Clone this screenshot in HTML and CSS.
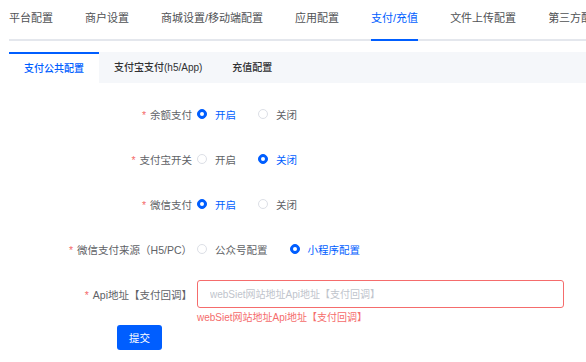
FILE: index.html
```html
<!DOCTYPE html>
<html lang="zh-CN">

<head>
    <meta charset="UTF-8">
    <meta name="viewport" content="width=device-width, initial-scale=1.0">
    <title>支付/充值</title>
    <link rel="stylesheet" href="styles.css">
</head>

<body>

    <!-- Top tabs -->
    <div class="top-tabs">
        <div class="top-tab"><span>平台配置</span></div>
        <div class="top-tab"><span>商户设置</span></div>
        <div class="top-tab"><span>商城设置/移动端配置</span></div>
        <div class="top-tab"><span>应用配置</span></div>
        <div class="top-tab active"><span>支付/充值</span></div>
        <div class="top-tab"><span>文件上传配置</span></div>
        <div class="top-tab"><span>第三方配置</span></div>
    </div>

    <!-- Card tabs -->
    <div class="card-tabs">
        <div class="card-tab active">支付公共配置</div>
        <div class="card-tab">支付宝支付(h5/App)</div>
        <div class="card-tab">充值配置</div>
    </div>

    <!-- Form -->
    <form class="form">
        <div class="form-item">
            <label class="form-label required">余额支付</label>
            <div class="radio-group">
                <label class="radio checked"><span class="dot"></span>开启</label>
                <label class="radio"><span class="dot"></span>关闭</label>
            </div>
        </div>

        <div class="form-item">
            <label class="form-label required">支付宝开关</label>
            <div class="radio-group">
                <label class="radio"><span class="dot"></span>开启</label>
                <label class="radio checked"><span class="dot"></span>关闭</label>
            </div>
        </div>

        <div class="form-item">
            <label class="form-label required">微信支付</label>
            <div class="radio-group">
                <label class="radio checked"><span class="dot"></span>开启</label>
                <label class="radio"><span class="dot"></span>关闭</label>
            </div>
        </div>

        <div class="form-item">
            <label class="form-label required">微信支付来源（H5/PC）</label>
            <div class="radio-group">
                <label class="radio"><span class="dot"></span>公众号配置</label>
                <label class="radio checked"><span class="dot"></span>小程序配置</label>
            </div>
        </div>

        <div class="form-item">
            <label class="form-label required">Api地址【支付回调】</label>
            <div class="input-wrap">
                <input class="input error" type="text" placeholder="webSiet网站地址Api地址【支付回调】">
                <div class="error-text">webSiet网站地址Api地址【支付回调】</div>
            </div>
        </div>

        <div class="form-actions">
            <button type="button" class="btn-primary">提交</button>
        </div>
    </form>

</body>

</html>
```

FILE: styles.css
```css
/* Page */
body {
    margin: 0;
    padding: 0 0 0 9px;
    background-color: #ffffff;
    font-family: "Liberation Sans", "Noto Sans CJK SC", sans-serif;
    color: #606266;
    overflow: hidden;
}

/* Top tabs */
.top-tabs {
    display: flex;
    white-space: nowrap;
    border-bottom: 2px solid #e4e7ed;
    height: 39px;
}

.top-tab {
    padding: 0 16px;
    font-size: 11px;
    color: #505255;
    flex-shrink: 0;
}

.top-tab:first-child {
    padding-left: 0;
}

.top-tab span {
    display: inline-block;
    height: 39px;
    line-height: 36px;
    border-bottom: 2px solid transparent;
}

.top-tab.active span {
    color: #005eff;
    border-bottom-color: #005eff;
}

/* Card tabs */
.card-tabs {
    display: flex;
    margin-top: 11px;
    height: 31px;
    background-color: #f5f7fa;
}

.card-tab {
    padding: 0 15px;
    font-size: 10px;
    font-weight: 500;
    line-height: 31px;
    color: #303133;
    white-space: nowrap;
}

.card-tab.active {
    background-color: #ffffff;
    color: #005eff;
    border-top: 2px solid #005eff;
    line-height: 29px;
}

/* Form */
.form {
    padding-top: 17px;
}

.form-item {
    display: flex;
    align-items: center;
    height: 28px;
    margin-bottom: 17px;
}

.form-label {
    width: 183px;
    padding-right: 5px;
    text-align: right;
    font-size: 10.5px;
    color: #606266;
    white-space: nowrap;
}

.form-label.required::before {
    content: "*";
    color: #f56c6c;
    margin-right: 4px;
}

/* Radios */
.radio-group {
    display: flex;
    align-items: center;
}

.radio {
    display: flex;
    align-items: center;
    font-size: 10.5px;
    color: #606266;
    margin-right: 22px;
}

.dot {
    width: 10px;
    height: 10px;
    box-sizing: border-box;
    border: 1px solid #dcdfe6;
    border-radius: 50%;
    margin-right: 8px;
    background-color: #ffffff;
    position: relative;
}

.radio.checked {
    color: #005eff;
}

.radio.checked .dot {
    background-color: #005eff;
    border-color: #005eff;
}

.radio.checked .dot::after {
    content: "";
    position: absolute;
    width: 4px;
    height: 4px;
    left: 2px;
    top: 2px;
    border-radius: 50%;
    background-color: #ffffff;
}

/* Input */
.input-wrap {
    position: relative;
}

.input {
    width: 367px;
    height: 28px;
    box-sizing: border-box;
    border: 1px solid #dcdfe6;
    border-radius: 3px;
    padding: 0 12px;
    font-family: inherit;
    font-size: 10px;
    outline: none;
}

.input.error {
    border-color: #f56c6c;
}

.input::placeholder {
    color: #c0c4cc;
}

.error-text {
    position: absolute;
    top: 100%;
    left: 0;
    margin-top: 1px;
    font-size: 10px;
    color: #f56c6c;
    white-space: nowrap;
}

/* Submit */
.form-actions {
    padding-left: 108px;
}

.btn-primary {
    width: 45px;
    height: 25px;
    border: none;
    border-radius: 3px;
    background-color: #005eff;
    color: #ffffff;
    font-family: inherit;
    font-size: 10.5px;
    cursor: pointer;
}
```
